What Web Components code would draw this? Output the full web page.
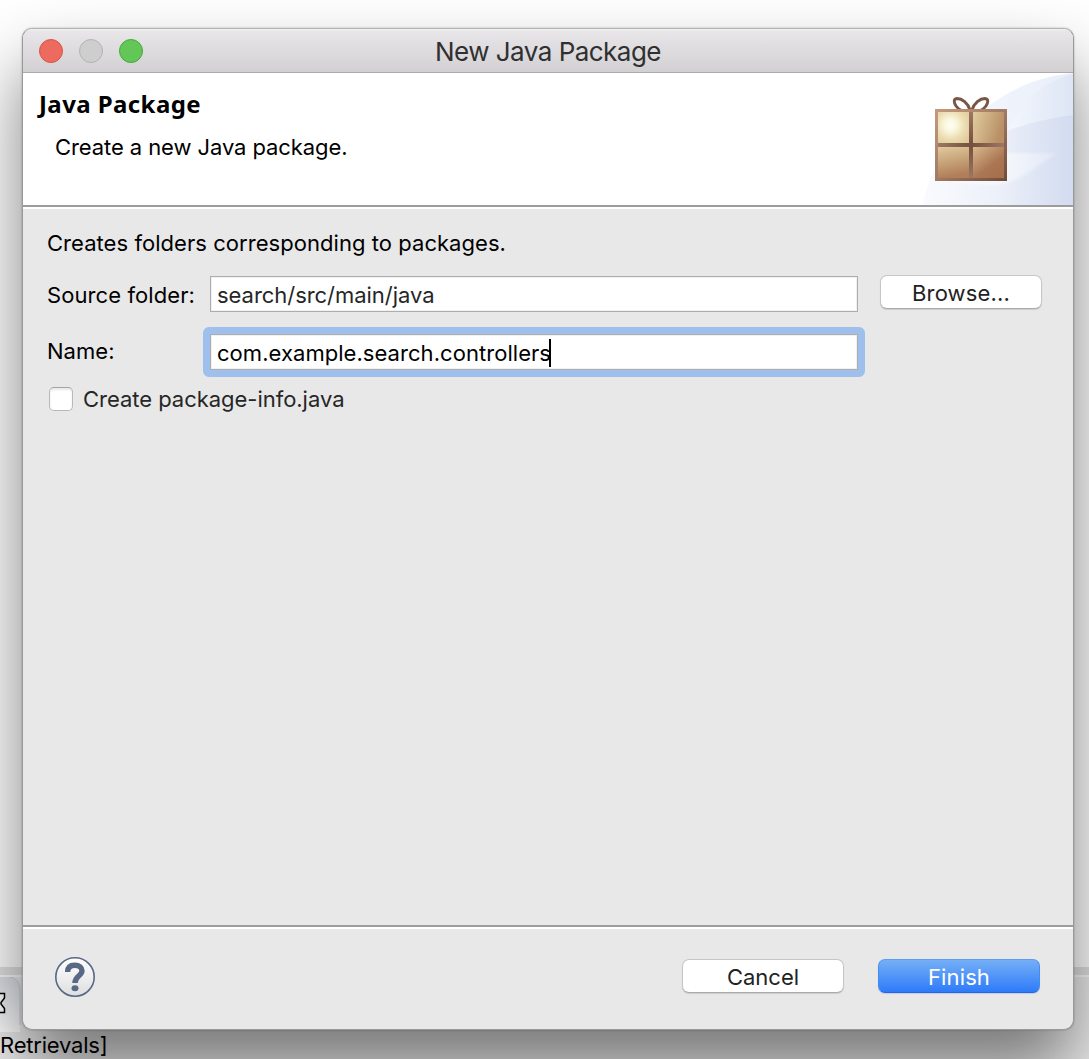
<!DOCTYPE html>
<html lang="en">
<head>
<meta charset="utf-8">
<title>New Java Package</title>
<style>
html,body{margin:0;height:100%;overflow:hidden}
body{font-family:Inter,"Liberation Sans",sans-serif;font-size:22px;line-height:26px;color:#000;display:grid;width:1089px;height:1059px}
back-drop,dialog-window{grid-area:1/1}
</style>
</head>
<body>
<back-drop></back-drop>
<dialog-window>
  <title-bar slot="title"><fit-text width="226">New Java Package</fit-text></title-bar>
  <wizard-header slot="header">
    <fit-text class="h" slot="heading" width="162">Java Package</fit-text>
    <fit-text slot="message" width="292.500">Create a new Java package.</fit-text>
  </wizard-header>
  <package-form slot="body"></package-form>
  <dialog-footer slot="footer">
    <push-button><fit-text width="72">Cancel</fit-text></push-button>
    <push-button primary><fit-text width="62">Finish</fit-text></push-button>
  </dialog-footer>
</dialog-window>
<script>
const define=(name,html,extra)=>customElements.define(name,class extends HTMLElement{
  connectedCallback(){
    if(!this.shadowRoot){this.attachShadow({mode:'open'}).innerHTML=html}
    if(extra)extra(this);
  }
});

/* Text run whose tracking is adjusted to a given advance width. */
define('fit-text','<style>:host{display:block;white-space:pre;flex:none}span{display:inline-block}</style><span><slot></slot></span>',el=>{
  const fit=()=>{
    const s=el.shadowRoot.querySelector('span');
    s.style.letterSpacing='0';
    const w=s.getBoundingClientRect().width,n=el.textContent.length;
    if(w)s.style.letterSpacing=((el.getAttribute('width')-w)/n).toFixed(3)+'px';
    el.style.width=el.getAttribute('width')+'px';
  };
  fit();
  document.addEventListener('DOMContentLoaded',fit);
});

define('push-button',`<style>
:host{display:flex;box-sizing:border-box;width:162px;height:34px;padding-top:2px;border-radius:7px;background:#fff;border:1px solid #c6c6c6;border-bottom-color:#aaa;box-shadow:0 1px 1px rgba(0,0,0,.12);justify-content:center;align-items:center;color:#222;flex:none}
:host([primary]){background:linear-gradient(#75aff6,#2e7bf9);border-color:#5c9cf2 #438cf5 #1f64f5;color:#fff}
</style><slot></slot>`);

define('text-field',`<style>
:host{display:flex;box-sizing:border-box;width:648px;height:36px;border:1px solid #adadad;background:#fff;box-shadow:inset 0 0 0 1px #f1f1f1;padding:5px 0 0 6px;color:#262626;flex:none}
:host([focused]){color:#000}
.ring{display:none;position:absolute;box-sizing:border-box;width:662px;height:50px;margin:-13px 0 0 -14px;border:7px solid #9fbfec;border-radius:6px}
i{display:none;width:2px;height:28px;background:#000;margin:-1px 0 0 -2px}
:host([focused]) i,:host([focused]) .ring{display:block}
</style><div class="ring"></div><slot></slot><i></i>`);

define('check-box',`<style>
:host{display:flex;gap:10px;color:#262626}
b{width:22px;height:22px;border:1px solid #b9b9b9;border-top-color:#a4a4a4;border-radius:5px;background:#fff;box-shadow:inset 0 2px 2px #e9e9e9;flex:none}
</style><b></b><slot></slot>`);

define('back-drop',`<style>
:host{display:flex;flex-direction:column;background:#fff}
.top{height:967px}
.band{height:8px;background:#e2e2e2}
.line{height:2px;background:#fbfbfb}
.low{flex:1;background:#ededed;display:flex;flex-direction:column}
svg{display:block;width:40px;height:55px}
</style><div class="top"></div><div class="band"></div><div class="line"></div>
<div class="low"><svg viewBox="0 0 40 55">
<defs><linearGradient id="t" x1="0" y1="0" x2="0" y2="1"><stop offset="0" stop-color="#dce1e8"/><stop offset="1" stop-color="#fff"/></linearGradient></defs>
<path d="M0 0H9Q19 1 20 12V55H0Z" fill="url(#t)"/><path d="M0 -.5H9Q19 1 20 12V48" fill="none" stroke="#ccd0d6"/>
<path d="M0 16.500H4.500V21L1 25.500V27L4.500 31.500V35.500H0" fill="#fff" stroke="#000" stroke-width="1.500"/></svg>
<fit-text width="107.500">Retrievals]</fit-text></div>`);

define('dialog-window',`<style>
:host{display:flex;flex-direction:column;box-sizing:border-box;width:1052px;height:1002px;margin:28px 0 0 22px;border:1px solid #999;border-top-color:#b4b4b4;border-radius:10px;background:#e8e8e8;box-shadow:0 40px 70px rgba(0,0,0,.5),0 0 2px rgba(0,0,0,.3)}
.rule{height:2px;background:#9c9c9c;border-bottom:2px solid #fff;flex:none}
.body{height:716px;flex:none}
</style><slot name="title"></slot><slot name="header"></slot><div class="rule"></div>
<div class="body"><slot name="body"></slot></div><div class="rule"></div><slot name="footer"></slot>`);

define('title-bar',`<style>
:host{display:grid;grid-template-columns:1fr auto 1fr;align-items:center;height:43px;flex:none;box-sizing:content-box;border-bottom:1px solid #acacac;background:linear-gradient(#f4f3f4 0,#e8e6e8 2px,#d2d0d2);border-radius:9px 9px 0 0;font-size:26px;line-height:32px;color:#303030}
div{display:flex;gap:16px;padding-left:16px}
i{width:22px;height:22px;border-radius:50%;border:1px solid #d9534b;background:#ed6a5f}
i:nth-child(2){border-color:#b4b3b4;background:#cfcecf}
i:nth-child(3){border-color:#49a73d;background:#62c756}
::slotted(*){padding-top:2px}
</style><div><i></i><i></i><i></i></div><slot></slot>`);

define('wizard-header',`<style>
:host{display:flex;justify-content:space-between;height:132px;background:#fff;flex:none}
.t{padding:15px 0 0 16px}
.m{padding:14px 0 0 16px}
::slotted(.h){font:700 24px/32px "Noto Sans",sans-serif;height:32px}
svg{display:block}
</style><div class="t"><slot name="heading"></slot><div class="m"><slot name="message"></slot></div></div>
<svg width="150" height="132" viewBox="0 0 150 132">
<defs>
<linearGradient id="a"><stop offset="0" stop-color="#f8fafd"/><stop offset="1" stop-color="#e8eefa"/></linearGradient>
<linearGradient id="b"><stop offset="0" stop-color="#f5f8fd"/><stop offset="1" stop-color="#dde5f5"/></linearGradient>
<linearGradient id="c"><stop offset="0" stop-color="#fafbfe"/><stop offset=".5" stop-color="#ecf0f9"/><stop offset="1" stop-color="#d2dbf0"/></linearGradient>
<linearGradient id="r" gradientUnits="userSpaceOnUse" x1="84" y1="80" x2="134" y2="80"><stop offset="0" stop-color="#fff" stop-opacity=".5"/><stop offset="1" stop-color="#fff" stop-opacity=".2"/></linearGradient>
<linearGradient id="f" x2="1" y2="1"><stop offset="0" stop-color="#c59b7d"/><stop offset=".5" stop-color="#a27a62"/><stop offset="1" stop-color="#6f4b3b"/></linearGradient>
<radialGradient id="p1" cx=".4" cy=".42" r=".75"><stop offset="0" stop-color="#fffef8"/><stop offset=".25" stop-color="#fbf7df"/><stop offset=".65" stop-color="#eadbae"/><stop offset="1" stop-color="#dfc99a"/></radialGradient>
<linearGradient id="p2" y2=".3"><stop offset="0" stop-color="#e1cc9e"/><stop offset="1" stop-color="#b98f66"/></linearGradient>
<linearGradient id="p3" x2=".2" y2="1"><stop offset="0" stop-color="#e0ca9b"/><stop offset="1" stop-color="#b07e59"/></linearGradient>
<linearGradient id="p4" x2=".8" y2="1"><stop offset="0" stop-color="#d8b98c"/><stop offset=".65" stop-color="#ab7653"/><stop offset="1" stop-color="#a66f4e"/></linearGradient>
<radialGradient id="x" gradientUnits="userSpaceOnUse" cx="48" cy="72" r="34"><stop offset="0" stop-color="#754f3f"/><stop offset="1" stop-color="#9d7864"/></radialGradient>
<filter id="s"><feGaussianBlur stdDeviation="1.500"/></filter>
</defs>
<path d="M0 132C8 80 65 8 150 0V132Z" fill="url(#a)"/>
<path d="M80 70C92 35 115 10 150 1V132H80Z" fill="url(#b)"/>
<path d="M0 132C10 85 75 52 150 42V132Z" fill="url(#c)"/>
<path d="M12 108V80H134L108 98Q88 111 70 112Z" fill="url(#r)" filter="url(#s)"/>
<g fill="none" stroke="#7a5545" stroke-width="2.900"><path d="M47 37C45 30 39 25.500 34 25.500C30 26 31 30 33 33Q35 36 39 37.500"/><path d="M49 37C51 30 57 25.500 62 25.500C66 26 65 30 63 33Q61 36 57 37.500"/></g>
<path d="M12 36H84V108H12Z" fill="url(#f)"/>
<path d="M15 39H46V70H15Z" fill="url(#p1)"/><path d="M50 39H81V70H50Z" fill="url(#p2)"/>
<path d="M15 74H46V105H15Z" fill="url(#p3)"/><path d="M50 74H81V105H50Z" fill="url(#p4)"/>
<path d="M46 39H50V70H81V74H50V105H46V74H15V70H46Z" fill="url(#x)"/>
</svg>`);

define('package-form',`<style>
:host{display:block;padding:21px 0 0 24px}
.row{display:flex}
.row .l{width:163px}
.src{margin-top:19px}
.name{margin-top:22px}
.src text-field{margin-top:1px}
push-button{margin-left:22px}
.src .l{padding-top:7px}
.name .l{padding-top:4px}
check-box{margin:17px 0 0 2px}
check-box fit-text{margin-top:-1px}
</style>
<fit-text width="459">Creates folders corresponding to packages.</fit-text>
<div class="row src"><div class="l"><fit-text width="148">Source folder:</fit-text></div><text-field><fit-text width="217.500">search/src/main/java</fit-text></text-field><push-button><fit-text width="98">Browse...</fit-text></push-button></div>
<div class="row name"><div class="l"><fit-text width="67.500">Name:</fit-text></div><text-field focused><fit-text width="334">com.example.search.controllers</fit-text></text-field></div>
<check-box><fit-text width="261.500">Create package-info.java</fit-text></check-box>`);

define('dialog-footer',`<style>
:host{display:flex;align-items:flex-start;gap:34px;padding:30px 33px 0 32px}
svg{display:block;margin:-2px auto 0 0}
</style><svg width="40" height="40" viewBox="0 0 40 40"><defs><linearGradient id="g" x2="0" y2="1"><stop offset="0" stop-color="#fff"/><stop offset="1" stop-color="#dedede"/></linearGradient></defs>
<circle cx="20" cy="20" r="19.200" fill="url(#g)" stroke="#596885" stroke-width="1.600"/>
<path d="M12.600 15C12.600 10 15.800 8.200 19.800 8.200C24.400 8.200 27 10.500 27 13.800C27 19 20 18.800 20 26" fill="none" stroke="#596885" stroke-width="5.400"/><ellipse cx="20" cy="31.200" rx="3.500" ry="3" fill="#596885"/></svg><slot></slot>`);
</script>
</body>
</html>
